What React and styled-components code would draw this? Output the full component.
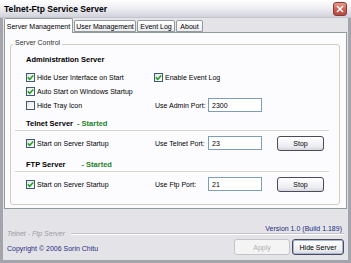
import styled, { createGlobalStyle } from "styled-components";

const Global = createGlobalStyle`
  body {
    margin: 0;
    font-family: "Liberation Sans", Arial, sans-serif;
    font-size: 7px;
    color: #000;
  }
`

const Window = styled.div`
  width: 351px;
  height: 263px;
  display: flex;
  flex-direction: column;
  background: #e4e4e8;
  overflow: hidden;
`

const TitleBar = styled.div`
  height: 18px;
  flex: 0 0 18px;
  display: flex;
  align-items: center;
  justify-content: space-between;
  padding: 0 4px 0 4px;
  box-sizing: border-box;
  background: linear-gradient(#ffffff, #f2f2f6 40%, #d2d2dc);
  border-bottom: 1px solid #c4c4cc;
`

const Title = styled.div`
  font-weight: 700;
  font-size: 8.5px;
  letter-spacing: 0.05px;
`

const CloseBtn = styled.div`
  width: 14px;
  height: 14px;
  box-sizing: border-box;
  border: 1px solid #8a3a3a;
  border-radius: 3px;
  background: linear-gradient(#e89a8a, #c75a4c 60%, #b34a40);
  display: flex;
  align-items: center;
  justify-content: center;
`

const Frame = styled.div`
  flex: 1;
  display: flex;
  flex-direction: column;
  border: 3px solid #a4a4ac;
  border-top: none;
  padding: 0 1px;
`

const Tabs = styled.div`
  display: flex;
  align-items: flex-end;
  height: 14px;
  position: relative;
  z-index: 1;
`

const Tab = styled.div`
  width: ${p => p.$w}px;
  height: ${p => (p.$active ? 15 : 12)}px;
  margin-bottom: ${p => (p.$active ? -1 : 0)}px;
  box-sizing: border-box;
  border: 1px solid #919b9c;
  border-bottom: ${p => (p.$active ? "none" : "1px solid #919b9c")};
  border-radius: 2px 2px 0 0;
  background: ${p => (p.$active ? "#fcfcfe" : "linear-gradient(#ffffff, #ececf0)")};
  display: flex;
  align-items: center;
  justify-content: center;
  white-space: nowrap;
  margin-right: 1px;
`

const Panel = styled.div`
  height: 177px;
  box-sizing: border-box;
  border: 1px solid #919b9c;
  background: #fcfcfe;
  display: flex;
  flex-direction: column;
`

const GroupBox = styled.div`
  flex: 1;
  margin: 11px 6px 3px 5px;
  border: 1px solid #d0d0bf;
  border-radius: 3px;
  position: relative;
  padding: 0 14px 0 15px;
  display: flex;
  flex-direction: column;
`

const Legend = styled.span`
  position: absolute;
  top: -7px;
  left: 2px;
  padding: 0 2px;
  line-height: 9px;
  background: #fcfcfe;
  color: #333;
`

const Section = styled.div`
  margin-top: ${p => p.$top}px;
  display: flex;
  flex-direction: column;
`

const Header = styled.div`
  height: 12px;
  display: flex;
  align-items: center;
  font-weight: 700;
  font-size: 7.5px;
`

const Status = styled.span`
  margin-left: ${p => p.$offset}px;
  color: #23822a;
`

const Separator = styled.div`
  height: 0;
  margin: 1px -4px 3px -11px;
  border-top: 1px solid #d6d6d0;
  border-bottom: 1px solid #ffffff;
`

const Row = styled.div`
  height: ${p => p.$h}px;
  margin-top: ${p => p.$mt || 0}px;
  display: grid;
  grid-template-columns: 128px 54px 54px 1fr;
  align-items: center;
`

const CheckWrap = styled.label`
  display: flex;
  align-items: center;
  gap: 2px;
  white-space: nowrap;
  grid-column: ${p => p.$span || "auto"};
`

const Box = styled.span`
  width: 9px;
  height: 9px;
  box-sizing: border-box;
  border: 1px solid #3d5a7a;
  background: linear-gradient(135deg, #e6e6e0, #ffffff);
  display: flex;
  align-items: center;
  justify-content: center;
`

const FieldLabel = styled.span`
  padding-left: 1px;
  white-space: nowrap;
`

const Input = styled.div`
  width: 54px;
  height: 14px;
  box-sizing: border-box;
  border: 1px solid #7f9db9;
  background: #fff;
  padding-left: 3px;
  display: flex;
  align-items: center;
`

const Button = styled.div`
  width: ${p => p.$w}px;
  height: ${p => p.$h || 15}px;
  box-sizing: border-box;
  border: 1px solid ${p => (p.$disabled ? "#c4c4c8" : "#4a4a58")};
  border-radius: 3px;
  background: ${p => (p.$disabled ? "#f4f4f4" : "linear-gradient(#ffffff, #eeeef2 70%, #d6d6de)")};
  color: ${p => (p.$disabled ? "#b0b0b0" : "#000")};
  box-shadow: ${p => (p.$focus ? "inset 0 0 0 1px #a8b8d8" : "none")};
  display: flex;
  align-items: center;
  justify-content: center;
  margin-left: ${p => p.$ml || 0}px;
  white-space: nowrap;
`

const Footer = styled.div`
  padding: 0 3px;
  display: flex;
  flex-direction: column;
`

const EtchRow = styled.div`
  margin-top: 15px;
  height: 10px;
  display: flex;
  align-items: flex-end;
`

const EtchLabel = styled.span`
  font-style: italic;
  color: #9a9aa2;
  line-height: 9px;
  margin-bottom: -4px;
  padding-right: 6px;
  white-space: nowrap;
`

const EtchLine = styled.div`
  flex: 1;
  border-bottom: 1px solid #c4c4cc;
  box-shadow: 0 1px 0 #ffffff;
  text-align: right;
  line-height: 9px;
  color: #1f2a80;
  padding-right: 2px;
  white-space: nowrap;
`

const BottomRow = styled.div`
  margin-top: 5px;
  height: 16px;
  display: flex;
  justify-content: space-between;
`

const Copyright = styled.span`
  align-self: flex-end;
  margin-bottom: 2px;
  line-height: 9px;
  color: #1f2a80;
`

const Buttons = styled.div`
  display: flex;
  gap: 2px;
`

function Check({ label, checked = true, span }) {
  return (
    <CheckWrap $span={span}>
      <Box>
        {checked && (
          <svg width="7" height="7" viewBox="0 0 7 7">
            <polyline points="0.8,3.4 2.7,5.3 6.2,1.4" fill="none" stroke="#21a121" strokeWidth="1.5" />
          </svg>
        )}
      </Box>
      {label}
    </CheckWrap>
  )
}

function PortRow({ checkLabel, portLabel, port }) {
  return (
    <Row $h={16}>
      <Check label={checkLabel} />
      <FieldLabel>{portLabel}</FieldLabel>
      <Input>{port}</Input>
      <Button $w={47} $ml={15}>Stop</Button>
    </Row>
  )
}

export default function App() {
  return (
    <Window>
      <Global />
      <TitleBar>
        <Title>Telnet-Ftp Service Server</Title>
        <CloseBtn>
          <svg width="8" height="8" viewBox="0 0 8 8">
            <path d="M1 1 L7 7 M7 1 L1 7" stroke="#fff" strokeWidth="1.6" />
          </svg>
        </CloseBtn>
      </TitleBar>
      <Frame>
        <Tabs>
          <Tab $w={69} $active>Server Management</Tab>
          <Tab $w={62}>User Management</Tab>
          <Tab $w={38}>Event Log</Tab>
          <Tab $w={27}>About</Tab>
        </Tabs>
        <Panel>
          <GroupBox>
            <Legend>Server Control</Legend>
            <Section $top={8}>
              <Header>Administration Server</Header>
              <Row $h={14} $mt={5}>
                <Check label="Hide User Interface on Start" />
                <Check label="Enable Event Log" span="2 / 5" />
              </Row>
              <Row $h={14}>
                <Check label="Auto Start on Windows Startup" />
              </Row>
              <Row $h={14}>
                <Check label="Hide Tray Icon" checked={false} />
                <FieldLabel>Use Admin Port:</FieldLabel>
                <Input>2300</Input>
              </Row>
            </Section>
            <Section $top={5}>
              <Header>
                Telnet Server<Status $offset={4}>- Started</Status>
              </Header>
              <Separator />
              <PortRow checkLabel="Start on Server Startup" portLabel="Use Telnet Port:" port="23" />
            </Section>
            <Section $top={7}>
              <Header>
                FTP Server<Status $offset={16}>- Started</Status>
              </Header>
              <Separator />
              <PortRow checkLabel="Start on Server Startup" portLabel="Use Ftp Port:" port="21" />
            </Section>
          </GroupBox>
        </Panel>
        <Footer>
          <EtchRow>
            <EtchLabel>Telnet - Ftp Server</EtchLabel>
            <EtchLine>Version 1.0 (Build 1.189)</EtchLine>
          </EtchRow>
          <BottomRow>
            <Copyright>Copyright © 2006 Sorin Chitu</Copyright>
            <Buttons>
              <Button $w={56} $h={16} $disabled>Apply</Button>
              <Button $w={52} $h={16} $focus>Hide Server</Button>
            </Buttons>
          </BottomRow>
        </Footer>
      </Frame>
    </Window>
  );
}
